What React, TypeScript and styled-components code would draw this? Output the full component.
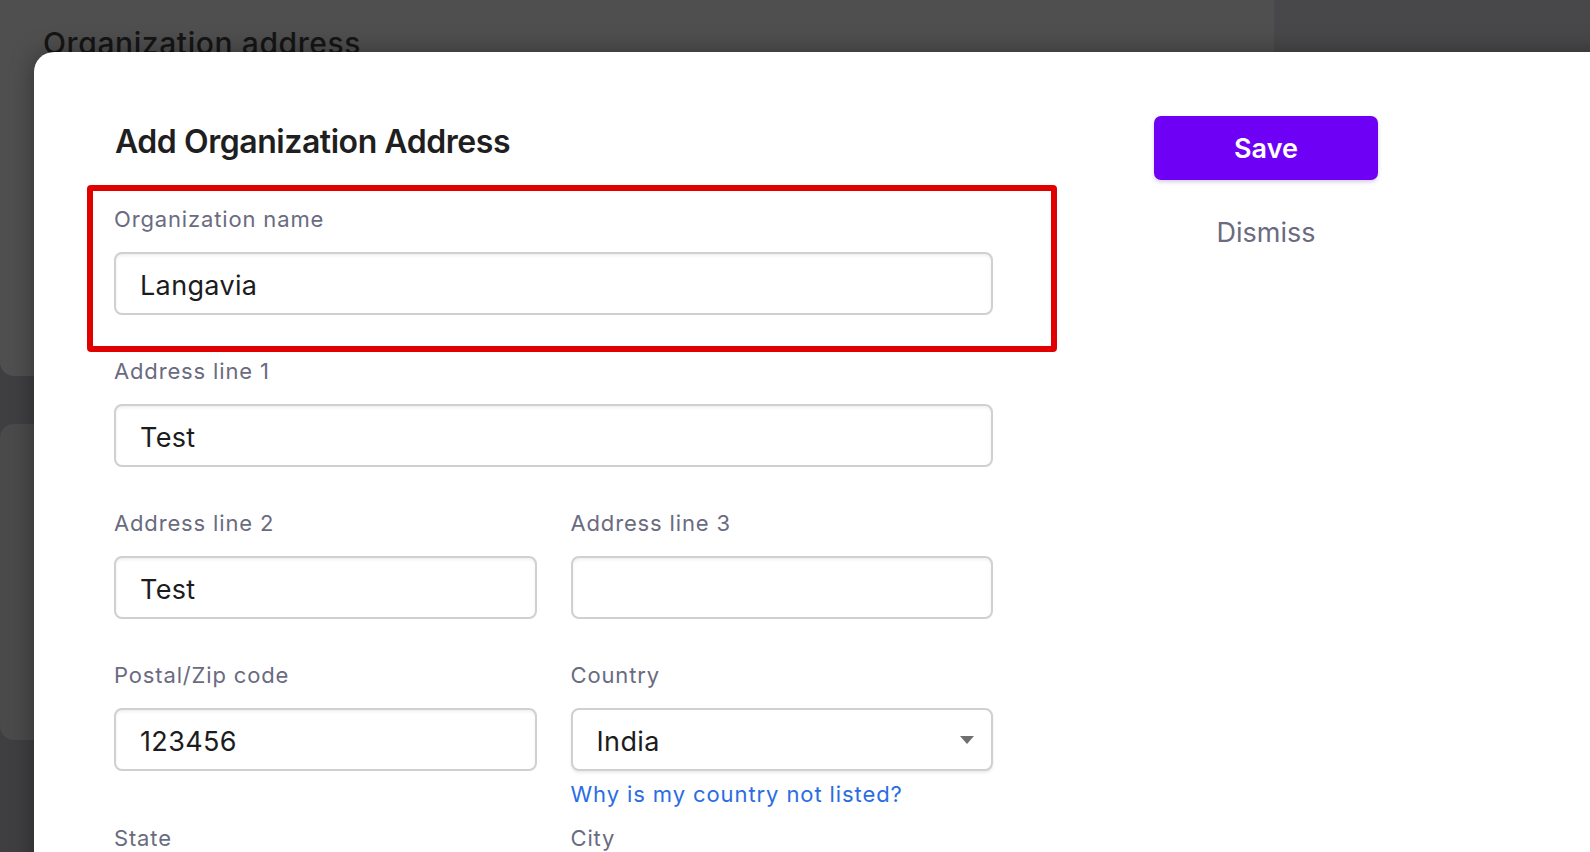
import React from "react";
import styled, { createGlobalStyle } from "styled-components";

// Types -------------------------------------------------------------------------

interface IField {
  label: string;
  value?: string;
  full?: boolean;
  highlight?: boolean;
}

// Component ---------------------------------------------------------------------

const TextField: React.FC<IField> = ({ label, value = "", full, highlight }) => (
  <Field $full={full} $highlight={highlight}>
    <Label>{label}</Label>
    <Input readOnly value={value} />
  </Field>
);

const App: React.FC = () => {
  return (
    <>
      <GlobalStyle />
      <Page>
        <Backdrop>
          <MainColumn>
            <Card $height={376}>
              <CardHeading>Organization address</CardHeading>
            </Card>
            <Card $height={316} />
          </MainColumn>
          <SidePanel />
        </Backdrop>

        <Modal>
          <FormColumn>
            <Title>Add Organization Address</Title>
            <Grid>
              <TextField label="Organization name" value="Langavia" full highlight />
              <TextField label="Address line 1" value="Test" full />
              <TextField label="Address line 2" value="Test" />
              <TextField label="Address line 3" />
              <TextField label="Postal/Zip code" value="123456" />
              <Field $withHelp>
                <Label>Country</Label>
                <SelectWrap>
                  <Select defaultValue="India">
                    <option>India</option>
                  </Select>
                  <Caret width="14" height="8" viewBox="0 0 14 8">
                    <path d="M0 0h14L7 8z" fill="#6f6f72" />
                  </Caret>
                </SelectWrap>
                <HelpLink href="#">Why is my country not listed?</HelpLink>
              </Field>
              <TextField label="State" />
              <TextField label="City" />
            </Grid>
          </FormColumn>

          <Actions>
            <SaveButton>Save</SaveButton>
            <DismissButton>Dismiss</DismissButton>
          </Actions>
        </Modal>
      </Page>
    </>
  );
};

export default App;

// Styled ------------------------------------------------------------------------

const GlobalStyle = createGlobalStyle`
  html, body {
    margin: 0;
    padding: 0;
    height: 100%;
    overflow: hidden;
  }
  body {
    font-family: Inter, "Noto Sans", "Liberation Sans", sans-serif;
    background: #3f3f42;
  }
  * {
    box-sizing: border-box;
  }
`;

const Page = styled.div`
  position: relative;
  width: 1590px;
  height: 852px;
  overflow: hidden;
`;

const Backdrop = styled.div`
  display: flex;
  height: 100%;
`;

const MainColumn = styled.div`
  width: 1274px;
  display: flex;
  flex-direction: column;
  gap: 48px;
  background: #3f3f42;
`;

const Card = styled.div<{ $height: number }>`
  height: ${({ $height }) => $height}px;
  background: #4f4f4f;
  border-radius: 0 0 14px 14px;
  padding: 25px 43px;

  & + & {
    border-radius: 14px;
    background: #4a4a4b;
  }
`;

const CardHeading = styled.h2`
  margin: 0;
  font-size: 30px;
  line-height: 36px;
  font-weight: 500;
  color: #151515;
  letter-spacing: 0.6px;
`;

const SidePanel = styled.div`
  flex: 1;
  background: #48484a;
`;

const Modal = styled.div`
  position: absolute;
  top: 52px;
  left: 34px;
  right: -40px;
  bottom: -40px;
  background: #ffffff;
  border-radius: 20px;
  box-shadow: 0 0 24px rgba(0, 0, 0, 0.35);
  display: flex;
  align-items: flex-start;
  gap: 161px;
  padding: 64px 0 0 80px;
`;

const FormColumn = styled.div`
  width: 879px;
  padding-top: 6px;
`;

const Title = styled.h1`
  margin: 0 0 42px 1px;
  font-size: 32px;
  line-height: 40px;
  font-weight: 600;
  color: #1f1f21;
  letter-spacing: -0.45px;
`;

const Grid = styled.div`
  display: grid;
  grid-template-columns: 1fr 1fr;
  column-gap: 34px;
`;

const Field = styled.div<{ $full?: boolean; $highlight?: boolean; $withHelp?: boolean }>`
  position: relative;
  display: flex;
  flex-direction: column;
  grid-column: ${({ $full }) => ($full ? "1 / -1" : "auto")};
  padding-bottom: ${({ $withHelp }) => ($withHelp ? "14px" : "41px")};

  &::before {
    content: "";
    display: ${({ $highlight }) => ($highlight ? "block" : "none")};
    position: absolute;
    left: -27px;
    top: -19px;
    right: -64px;
    bottom: 4px;
    border: 6px solid #e00000;
    border-radius: 4px;
    pointer-events: none;
  }
`;

const Label = styled.label`
  font-size: 22px;
  line-height: 30px;
  color: #6a6b7f;
  margin: 0 0 18px 0;
  letter-spacing: 0.85px;
`;

const Input = styled.input`
  height: 63px;
  width: 100%;
  border: 2px solid #cfcfd4;
  border-radius: 8px;
  box-shadow: inset 0 2px 3px rgba(0, 0, 0, 0.06);
  padding: 3px 24px 0;
  font-family: inherit;
  font-size: 27px;
  letter-spacing: 0.35px;
  color: #1c1c1e;
  background: #ffffff;
  outline: none;
`;

const SelectWrap = styled.div`
  position: relative;
`;

const Select = styled.select`
  appearance: none;
  height: 63px;
  width: 100%;
  border: 2px solid #cfcfd4;
  border-radius: 8px;
  box-shadow: 0 2px 3px rgba(0, 0, 0, 0.08);
  padding: 3px 24px 0;
  font-family: inherit;
  font-size: 27px;
  letter-spacing: 0.35px;
  color: #1c1c1e;
  background: #ffffff;
  outline: none;
`;

const Caret = styled.svg`
  position: absolute;
  right: 19px;
  top: 28px;
`;

const HelpLink = styled.a`
  margin-top: 8px;
  font-size: 22px;
  line-height: 30px;
  color: #2a6de3;
  text-decoration: none;
  letter-spacing: 0.9px;
`;

const Actions = styled.div`
  width: 224px;
  display: flex;
  flex-direction: column;
  align-items: center;
`;

const SaveButton = styled.button`
  width: 224px;
  height: 64px;
  border: none;
  border-radius: 7px;
  background: #6e00f5;
  color: #ffffff;
  font-family: inherit;
  font-size: 27px;
  font-weight: 600;
  box-shadow: 0 2px 4px rgba(60, 0, 140, 0.2);
  cursor: pointer;
`;

const DismissButton = styled.button`
  margin-top: 35px;
  border: none;
  background: none;
  color: #6a6b7f;
  font-family: inherit;
  font-size: 27px;
  line-height: 36px;
  padding: 0;
  cursor: pointer;
`;
